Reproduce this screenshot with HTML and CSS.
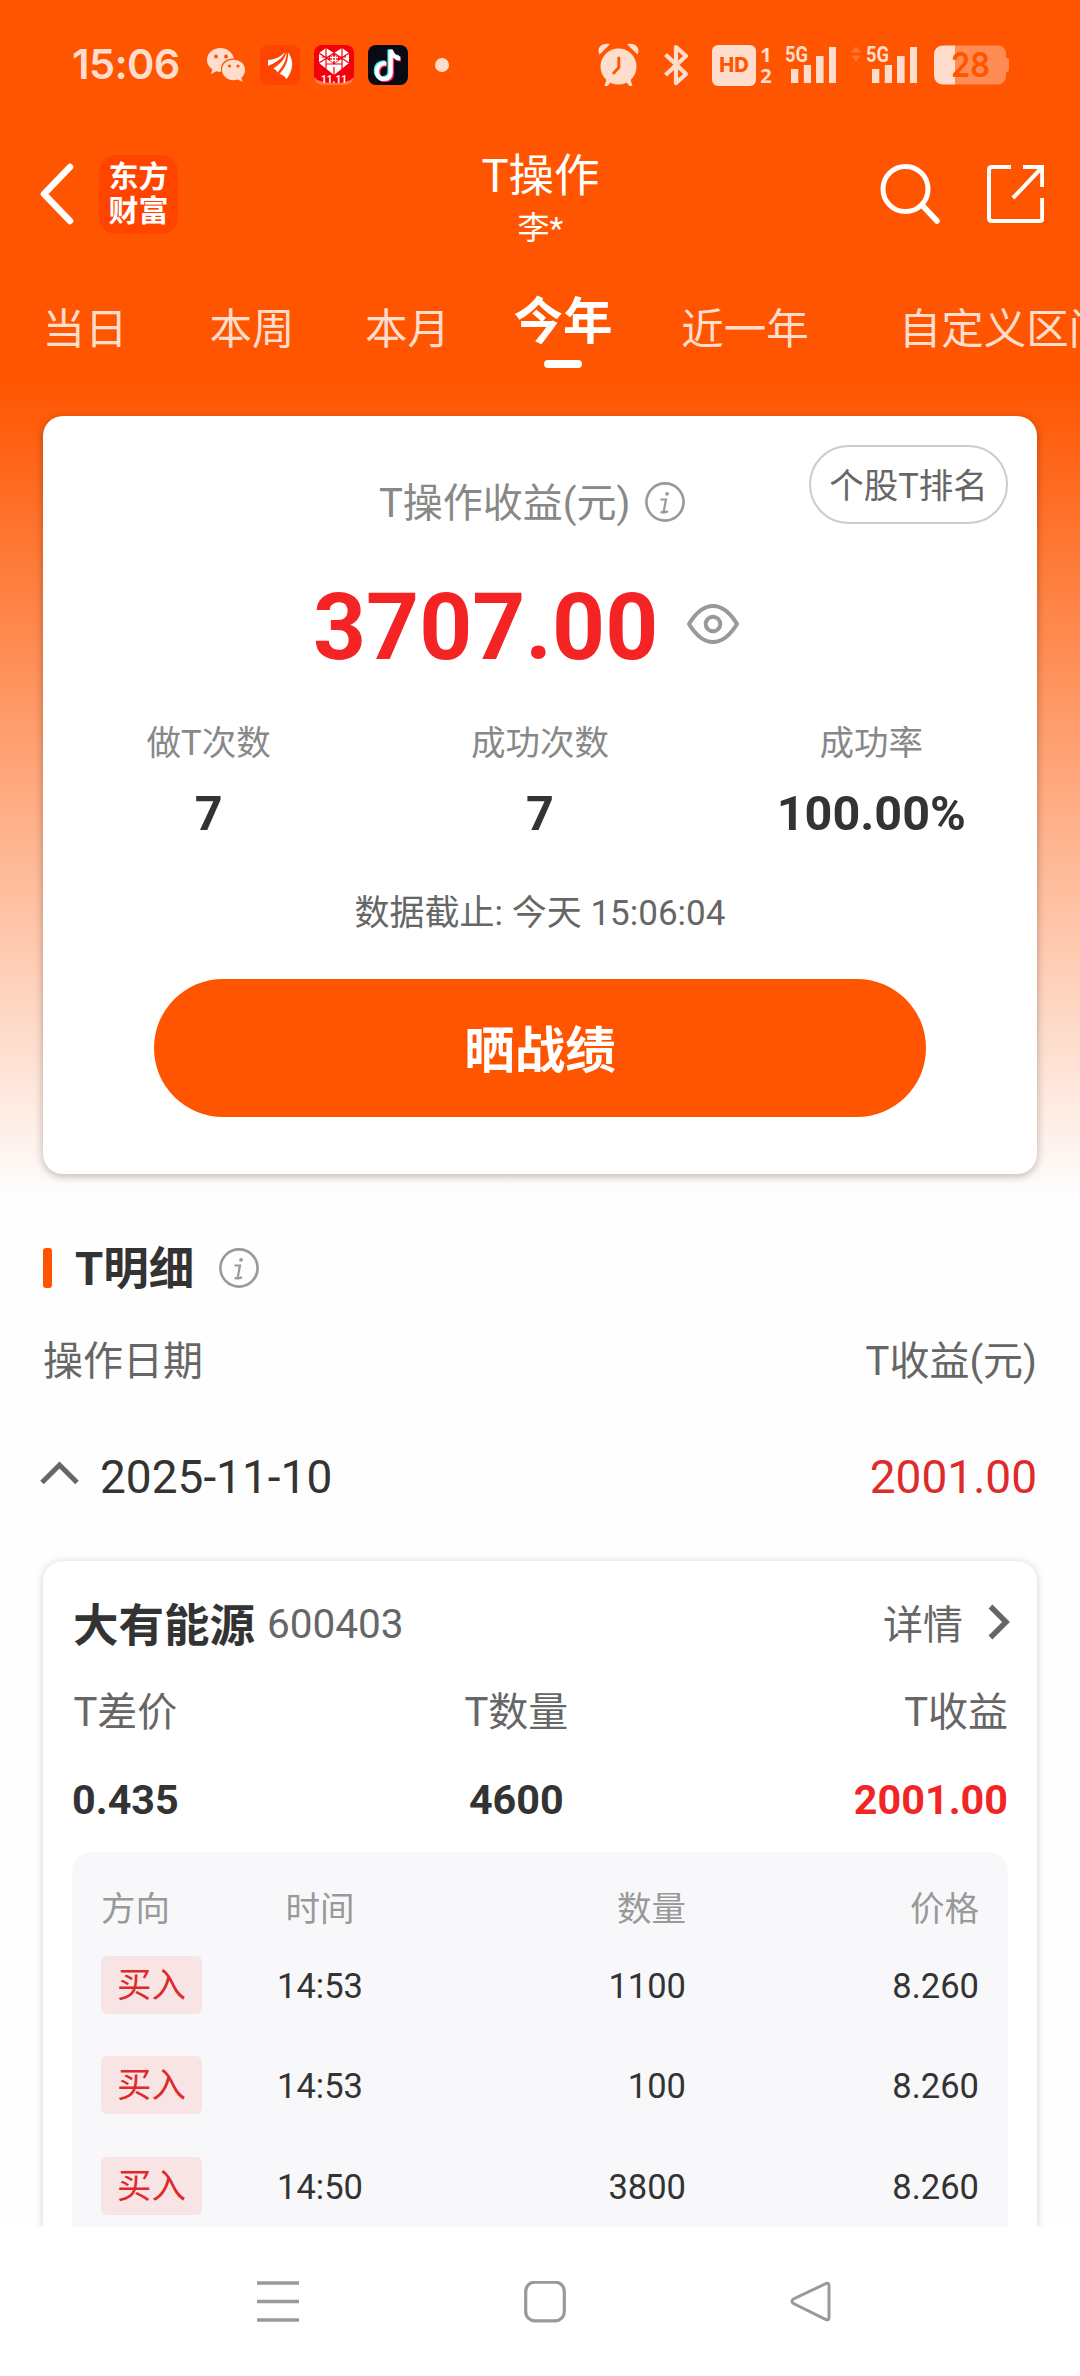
FILE: index.html
```html
<!DOCTYPE html>
<html lang="zh-CN">
<head>
<meta charset="utf-8">
<title>T操作</title>
<link rel="stylesheet" href="styles.css">
</head>
<body>
<div class="screen">
  <div class="status">
    <span class="clock">15:06</span>
    <svg class="wechat" width="39" height="34" viewBox="0 0 39 34"><g fill="#ffddcc"><path d="M13.500 0C6 0 0 5.200 0 12c0 4 2 7.200 5.300 9.300L4 26l5.500-2.800c1.300.4 3 .6 4.700.5C12.500 16 18.500 10 27 10.500 25.500 4.200 20 0 13.500 0z"/><path d="M38 22c0-6-5.200-10.200-11.500-10.200S15 16 15 22s5.200 10.200 11.500 10.200c1.500 0 3-.2 4.300-.7l4.700 2.300-1.200-4C36.600 28 38 25.200 38 22z"/></g><g fill="#ff5500"><circle cx="9" cy="8.500" r="1.900"/><circle cx="19" cy="8.500" r="1.900"/><circle cx="22.500" cy="18" r="1.600"/><circle cx="31" cy="18" r="1.600"/></g></svg>
    <svg class="app" width="40" height="40" viewBox="0 0 40 40"><rect width="40" height="40" rx="8" fill="#ff4400"/><g fill="#fff"><path d="M8 15C15 14.500 21 12 25 7 23 13.500 15 18 8 21z"/><path d="M13 23.500C20 19.500 25 14 26.500 7 27 15 22.500 22 17.500 27.500 16.500 25.500 15 24 13 23.500z"/><path d="M19.500 29C26 22 28.500 15 28 7.500c6.500 8 5 18.500-1.500 26.500-2-3-4.500-4.500-7-5z"/></g></svg>
    <svg class="app" width="40" height="40" viewBox="0 0 40 40"><defs><clipPath id="pc"><rect width="40" height="40" rx="8"/></clipPath></defs><g clip-path="url(#pc)"><rect width="40" height="40" fill="#f4000b"/><path d="M0 32Q5 38 20 38T40 32V40H0z" fill="#ff7a3d"/><path fill="#fff" d="M12 3l8 5 8-5 7 5v10L20 30 5 18V8z"/><g fill="none" stroke="#f4000b" stroke-width="1.200"><path d="M5 8l15 10L35 8M5 18l15-10 15 10M12 3v21M28 3v21M8 12h24M12 19h16M20 22v8"/></g><path fill="#f4000b" d="M20 8.500l6.500 5.500-6.500 5.500-6.500-5.500z"/><path stroke="#fff" stroke-width="1.300" d="M16 12.500h8M16 15.500h8M18.500 10.500v7M21.500 10.500v7"/><text x="20" y="38" class="tiny">11.11</text></g></svg>
    <svg class="app" width="40" height="40" viewBox="0 0 40 40"><rect width="40" height="40" rx="8" fill="#0a0a14"/><g fill="none" stroke-width="4.200"><path stroke="#25f4ee" d="M17 17.500c-12-1.500-12 16-2 15.500 4.500 0 6.500-3 6.500-6.500V4.500c1 5 5 7.500 9.500 7.500"/><path stroke="#fe2c55" d="M19.500 19.500c-12-1.500-12 16-2 15.500 4.500 0 6.500-3 6.500-6.500V6.500c1 5 4.500 8 9 8"/><path stroke="#fff" d="M18.200 18.500c-12-1.500-12 16-2 15.500 4.500 0 6.500-3 6.500-6.500V5c1 5 5 8 9.500 8.500"/></g></svg>
    <span class="dot"></span>
    <svg class="alarm" width="41" height="44" viewBox="0 0 41 44"><g fill="#ffddcc"><circle cx="20.500" cy="23.500" r="18"/><path d="M1.500 11.500C-2 5 4-1 12 1.200zM39.500 11.500C43 5 37-1 29 1.200z"/><path d="M9 35l-2.500 8h3l4.500-5.500zM32 35l2.500 8h-3L27 37.500z"/></g><path d="M20.800 15v9.500l-5 5.500" fill="none" stroke="#ff5500" stroke-width="3" stroke-linecap="round"/></svg>
    <svg class="bt" width="26" height="42" viewBox="0 0 26 42"><path d="M2.500 10.500L23 30 13 39V3l10 9L2.500 31" fill="none" stroke="#ffddcc" stroke-width="4.200" stroke-linejoin="round"/></svg>
    <div class="hd"><span>HD</span><p><b>1</b><b>2</b></p></div>
    <svg class="sig" width="52" height="40" viewBox="0 0 52 40"><text x="0" y="16.700" class="g5" textLength="23" lengthAdjust="spacingAndGlyphs">5G</text><path fill="#ffddcc" d="M6 24h7.300v14H6zM18.800 20h7.200v18h-7.200zM31 11h7.600v27H31zM44 2h7v36h-7z"/></svg>
    <svg class="sig2" width="67" height="40" viewBox="0 0 67 40"><path fill="#ff7733" d="M0 7.500l5-6 5 6zM0 10.500l5 6 5-6z"/><text x="15" y="16.700" class="g5" textLength="23" lengthAdjust="spacingAndGlyphs">5G</text><path fill="#ffddcc" d="M21 24h7.300v14H21zM33.800 20H41v18h-7.200zM46 11h7.600v27H46zM59 2h7v36h-7z"/></svg>
    <svg class="bat" width="76" height="40" viewBox="0 0 76 40"><path fill="#ff8c54" d="M21 .5h42q9 0 9 9v3.500h1q2 0 2 2v10q0 2-2 2h-1V30.500q0 9-9 9H21z"/><path fill="#ffddcc" d="M21 .5H10Q0 .5 0 10v20q0 9.500 10 9.500h11z"/><text x="17" y="32" class="bt28" textLength="39" lengthAdjust="spacingAndGlyphs">28</text></svg>
  </div>

  <div class="header">
    <svg class="back" width="36" height="62" viewBox="0 0 36 62"><path d="M31 4L5 31l26 27" fill="none" stroke="#fff" stroke-width="6.500" stroke-linecap="round" stroke-linejoin="round"/></svg>
    <div class="logo"><span>东方</span><span>财富</span></div>
    <div class="title"><h1>T操作</h1><p>李*</p></div>
    <svg class="search" width="60" height="62" viewBox="0 0 60 62"><circle cx="25.500" cy="26" r="22.500" fill="none" stroke="#fff" stroke-width="5"/><path d="M42 42l15 16" stroke="#fff" stroke-width="5.500" stroke-linecap="round"/></svg>
    <svg class="share" width="57" height="58" viewBox="0 0 57 58"><path d="M24 2H5Q2 2 2 5v48q0 3 3 3h48q2.200 0 2.200-2.500V33M36 2h19.200v20" fill="none" stroke="#fff" stroke-width="4"/><path d="M54.500 3L26 33" stroke="#fff" stroke-width="4"/></svg>
  </div>

  <div class="tabs">
    <span>当日</span><span>本周</span><span>本月</span><span class="on">今年</span><span>近一年</span><span>自定义区间</span>
  </div>

  <section class="card summary">
    <div class="pill">个股T排名</div>
    <div class="caption"><span>T操作收益(元)</span><svg class="info" width="40" height="40" viewBox="0 0 40 40"><circle cx="20" cy="20" r="18.600" fill="none" stroke="#999" stroke-width="2.600"/><circle cx="22" cy="11.800" r="1.900" fill="#999"/><path d="M15.500 17.500h5.500l-2.300 12M15.500 30q4 1.200 7.500-.8" fill="none" stroke="#999" stroke-width="2.200"/></svg></div>
    <div class="amount"><span>3707.00</span><svg width="52" height="40" viewBox="0 0 52 40"><path d="M2 20Q13 2 26 2t24 18Q39 38 26 38T2 20z" fill="none" stroke="#999" stroke-width="4" stroke-linejoin="round"/><circle cx="26" cy="20" r="7.300" fill="none" stroke="#999" stroke-width="4"/></svg></div>
    <div class="stats">
      <div><span>做T次数</span><b>7</b></div>
      <div><span>成功次数</span><b>7</b></div>
      <div><span>成功率</span><b>100.00%</b></div>
    </div>
    <div class="asof">数据截止: 今天 15:06:04</div>
    <div class="cta">晒战绩</div>
  </section>

  <div class="section-head"><i></i><h2>T明细</h2><svg class="info" width="40" height="40" viewBox="0 0 40 40"><circle cx="20" cy="20" r="18.600" fill="none" stroke="#999" stroke-width="2.600"/><circle cx="22" cy="11.800" r="1.900" fill="#999"/><path d="M15.500 17.500h5.500l-2.300 12M15.500 30q4 1.200 7.500-.8" fill="none" stroke="#999" stroke-width="2.200"/></svg></div>
  <div class="row cols"><span>操作日期</span><span>T收益(元)</span></div>
  <div class="row day"><svg width="39" height="24" viewBox="0 0 39 24"><path d="M2 21.500L19.500 4 37 21.500" fill="none" stroke="#666" stroke-width="5"/></svg><span class="date">2025-11-10</span><span class="red">2001.00</span></div>

  <section class="card detail">
    <div class="stock"><b>大有能源</b><span class="code">600403</span><span class="more">详情</span><svg width="22" height="36" viewBox="0 0 22 36"><path d="M2.500 2.500L18 18 2.500 33.500" fill="none" stroke="#666" stroke-width="5.500"/></svg></div>
    <div class="figures">
      <div><span>T差价</span><b>0.435</b></div>
      <div><span>T数量</span><b>4600</b></div>
      <div><span>T收益</span><b class="up">2001.00</b></div>
    </div>
    <div class="trades">
      <div class="tr th"><span>方向</span><span>时间</span><span>数量</span><span>价格</span></div>
      <div class="tr"><em>买入</em><span>14:53</span><span>1100</span><span>8.260</span></div>
      <div class="tr"><em>买入</em><span>14:53</span><span>100</span><span>8.260</span></div>
      <div class="tr"><em>买入</em><span>14:50</span><span>3800</span><span>8.260</span></div>
    </div>
  </section>

  <div class="nav">
    <svg width="42" height="42" viewBox="0 0 42 42"><path d="M0 2h42M0 20.500h42M0 39h42" stroke="#999" stroke-width="3.400"/></svg>
    <svg width="42" height="42" viewBox="0 0 42 42"><rect x="1.700" y="1.200" width="38.600" height="38.600" rx="9" fill="none" stroke="#999" stroke-width="3.200"/></svg>
    <svg width="42" height="42" viewBox="0 0 42 42"><path d="M36 2.500L3.500 18q-3 2 0 4.500L36 38.500q3 1 3-2V4.500q0-3-3-2z" fill="none" stroke="#999" stroke-width="3"/></svg>
  </div>
</div>
</body>
</html>
```

FILE: styles.css
```css
* { box-sizing: border-box; margin: 0; padding: 0; }
body {
  width: 1080px;
  font-family: Roboto, "Noto Sans CJK SC", sans-serif;
  color: #333;
  background: #fff;
}
svg { display: block; flex: none; }
i, em { font-style: normal; }
.screen {
  width: 1080px;
  height: 2376px;
  overflow: hidden;
  display: flex;
  flex-direction: column;
  background: linear-gradient(#ff5500 380px, #fefefe 1200px);
}
.screen > * { flex: none; }

/* system status bar */
.status { height: 130px; display: flex; align-items: center; padding-left: 72px; }
.clock {
  width: 135px;
  font: 600 41.500px/60px Inter, sans-serif;
  letter-spacing: -0.6px;
  color: #ffddcc;
  white-space: nowrap;
  margin-top: -2px;
}
.wechat, .app { margin-right: 14px; }
.dot { width: 14px; height: 14px; border-radius: 50%; background: #ffddcc; margin: 0 149px 0 13px; flex: none; }
.alarm { margin-right: 24px; }
.bt { margin-right: 23px; }
.hd { display: flex; gap: 3px; width: 61px; margin-right: 12px; }
.hd span {
  width: 44px;
  height: 41px;
  border-radius: 6px;
  background: #ffddcc;
  color: #ff5500;
  font: 800 20px/41px Inter, sans-serif;
  text-align: center;
}
.hd p { width: 14px; height: 41px; display: flex; flex-direction: column; justify-content: space-between; }
.hd b { font: 700 20px/20px "Noto Sans", sans-serif; color: #ffddcc; text-align: center; }
.sig { margin-right: 14px; }
.bat { margin-left: 16px; }
.tiny { font: 700 10px Roboto, sans-serif; fill: #fff; text-anchor: middle; }
.g5 { font: 700 22px Roboto, sans-serif; fill: #ffddcc; }
.bt28 { font: 600 34px Inter, sans-serif; fill: #ff5500; }

/* page header */
.header { height: 128px; display: flex; align-items: center; padding: 0 36px 0 39px; }
.logo {
  width: 79px;
  height: 79px;
  margin-left: 24px;
  border-radius: 17px;
  background: #ff4400;
  color: #fff;
  font-weight: 700;
  font-size: 30px;
  line-height: 34px;
  text-align: center;
  padding-top: 5px;
}
.logo span { display: block; }
.title { flex: 1; text-align: center; color: #fff; padding: 8px 0 0 23px; }
.title h1 { font-weight: 400; font-size: 45.500px; line-height: 60px; }
.title p { font-size: 32px; line-height: 44px; margin-top: -1px; }
.search { margin-right: 47px; }

.tabs {
  height: 158px;
  display: grid;
  grid-template-columns: 170px 164px 147px 164px 200px 320px;
  text-align: center;
  font-size: 42.500px;
  line-height: 60px;
  padding-top: 42px;
  color: #ffddcc;
}
.tabs .on { font-size: 49.500px; font-weight: 700; color: #fff; line-height: 44px; }
.on::after {
  content: "";
  display: block;
  width: 38px;
  height: 8px;
  margin: 16px auto 0;
  border-radius: 4px;
  background: #fff;
}

.card { margin: 0 43px; border-radius: 20px; background: #fff; }
.summary { position: relative; height: 758px; padding-top: 57px; box-shadow: 0 2px 8px rgba(0,0,0,.28); }
.pill {
  position: absolute;
  top: 29px;
  right: 29px;
  width: 199px;
  height: 79px;
  border: 2px solid #ccc;
  border-radius: 40px;
  text-align: center;
  font-size: 34.500px;
  line-height: 78px;
  color: #666;
}
.caption { display: flex; align-items: center; gap: 15px; height: 58px; padding-left: 336px; font-size: 40px; color: #888; }
.caption span { margin-top: -5px; }
.amount {
  display: flex;
  align-items: center;
  gap: 29px;
  height: 100px;
  margin-top: 47px;
  padding-left: 270px;
  font-size: 92.500px;
  font-weight: 700;
  line-height: 100px;
  color: #f42424;
}
.amount svg { margin-top: -9px; }
.stats { display: grid; grid-template-columns: repeat(3, 1fr); margin-top: 45px; text-align: center; }
.stats span { display: block; font-size: 34.500px; line-height: 40px; color: #888; }
.stats b { display: block; margin-top: 26px; font-size: 48.500px; line-height: 50px; }
.asof { margin-top: 55px; text-align: center; font-size: 35px; line-height: 40px; color: #666; }
.cta {
  width: 772px;
  height: 138px;
  margin: 45px auto 0;
  border-radius: 69px;
  background: #ff5500;
  color: #fff;
  text-align: center;
  font-size: 50.500px;
  font-weight: 700;
  line-height: 144px;
}

.section-head { display: flex; align-items: center; height: 60px; margin: 64px 43px 0; }
.section-head i { width: 9px; height: 40px; border-radius: 3px; background: #ff5500; }
.section-head h2 { margin: 4px 25px 0 23px; font-size: 45.500px; line-height: 60px; }
.row { display: flex; align-items: center; justify-content: space-between; height: 60px; margin: 0 43px; }
.cols { margin-top: 30px; font-size: 40px; color: #666; }
.day { margin: 59px 43px 0 40px; font-size: 46px; }
.day svg { margin-top: -9px; }
.date { flex: 1; margin-left: 21px; }
.red { color: #dd2b2b; }

.detail {
  margin-top: 54px;
  height: 666px;
  padding: 33px 29px 0;
  box-shadow: 0 1px 8px rgba(0,0,0,.18);
  clip-path: inset(-10px -10px 0 -10px);
  border-radius: 20px 20px 0 0;
}
.stock { display: flex; align-items: center; height: 60px; margin-left: 1px; }
.stock b { font-size: 45.500px; margin-top: -4px; }
.code { flex: 1; margin-left: 12px; font-size: 40.500px; color: #666; }
.more { margin: -4px 25px 0 0; font-size: 40px; color: #666; }
.stock svg { margin: -5px -2px 0 0; }
.figures { display: flex; justify-content: space-between; text-align: center; margin-top: 29px; }
.figures span { display: block; font-size: 40px; line-height: 60px; color: #666; }
.figures b { display: block; font-size: 41.300px; line-height: 60px; margin-top: 27px; }
.figures div:last-child { text-align: right; }
.up { color: #f02626; }
.trades { margin-top: 22px; height: 375px; padding: 27px 29px 0; background: #f8f8fa; border-radius: 20px 20px 0 0; }
.tr {
  display: grid;
  grid-template-columns: 101px 236px 248px 293px;
  align-items: center;
  height: 100.300px;
  text-align: right;
  font-size: 34.500px;
}
.tr span { padding-top: 2px; }
.tr span:nth-child(2) { text-align: center; }
.th { height: 50px; color: #999; }
.th span:first-child { text-align: left; }
.tr em {
  width: 101px;
  height: 58px;
  border-radius: 6px;
  background: #f8e4e5;
  color: #dd2a2a;
  text-align: center;
  line-height: 58px;
}
.th + .tr { margin-top: 6px; }

/* system navigation */
.nav { height: 149px; padding: 54px 248px 0 257px; display: flex; justify-content: space-between; background: #fff; }
```
